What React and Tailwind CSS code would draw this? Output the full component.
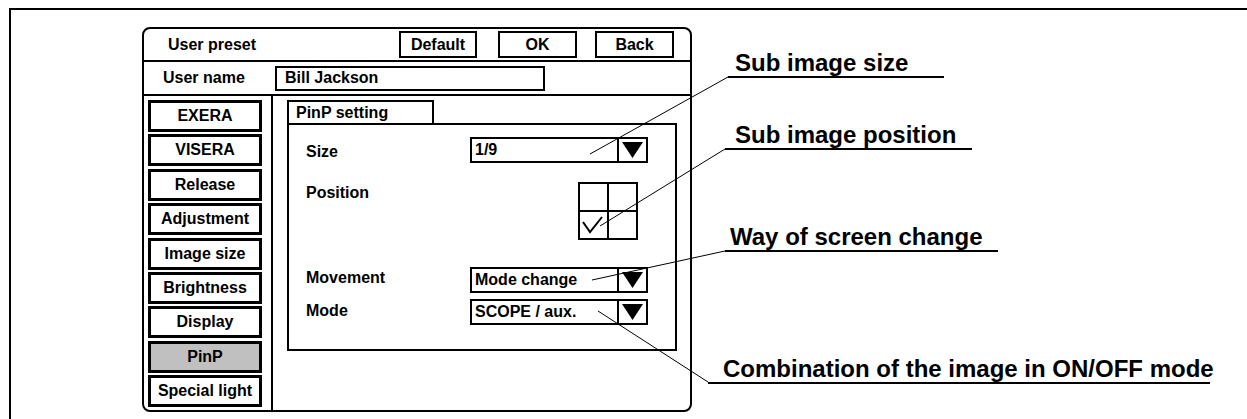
import React from 'react';
import clsx from 'clsx';

const menu = [
  'EXERA',
  'VISERA',
  'Release',
  'Adjustment',
  'Image size',
  'Brightness',
  'Display',
  'PinP',
  'Special light',
];

function TopButton({ children, className }) {
  return (
    <div
      className={clsx(
        'mt-[2px] flex h-[27px] items-center justify-center border-2 border-black',
        className
      )}
    >
      {children}
    </div>
  );
}

function Dropdown({ value }) {
  return (
    <div className="flex h-[26px] w-[178px] border-2 border-black">
      <div className="flex flex-1 items-center pl-[3px] whitespace-nowrap">{value}</div>
      <div className="flex w-[29px] items-center justify-center border-l-2 border-black">
        <svg width="21" height="16" viewBox="0 0 21 16">
          <polygon points="0,0 21,0 10.5,16" fill="black" />
        </svg>
      </div>
    </div>
  );
}

function Callout({ text, className }) {
  return (
    <div
      className={clsx(
        'whitespace-nowrap border-b-2 border-black text-[24px] leading-[26px]',
        className
      )}
    >
      {text}
    </div>
  );
}

export default function App() {
  return (
    <div className="relative h-[419px] w-[1247px] overflow-hidden bg-white pl-[9px] pt-[8px] font-['Liberation_Sans',Arial,sans-serif] font-bold text-black">
      <div className="flex h-full items-start border-l-2 border-t-2 border-black">
        {/* Settings panel */}
        <div className="ml-[131px] mt-[17px] flex h-[385px] w-[550px] shrink-0 flex-col rounded-[8px] border-2 border-black text-[16px] leading-[18px]">
          {/* Title row */}
          <div className="flex h-[33px] shrink-0 items-start border-b-2 border-black">
            <div className="flex h-[31px] w-[255px] items-center pl-[24px]">User preset</div>
            <TopButton className="w-[78px]">Default</TopButton>
            <TopButton className="ml-[21px] w-[79px]">OK</TopButton>
            <TopButton className="ml-[18px] w-[79px]">Back</TopButton>
          </div>

          {/* User name row */}
          <div className="flex h-[34px] shrink-0 items-center border-b-2 border-black">
            <div className="w-[131px] pl-[19px]">User name</div>
            <div className="flex h-[25px] w-[270px] items-center border-2 border-black pl-[8px]">
              Bill Jackson
            </div>
          </div>

          {/* Body */}
          <div className="flex flex-1">
            <div className="flex w-[129px] shrink-0 flex-col gap-[2.4px] border-r-2 border-black pl-[4px] pt-[4px]">
              {menu.map((item) => (
                <div
                  key={item}
                  className={clsx(
                    'flex h-[32px] w-[114px] items-center justify-center border-[3px] border-black whitespace-nowrap',
                    item === 'PinP' && 'bg-[#c0c0c0]'
                  )}
                >
                  {item}
                </div>
              ))}
            </div>

            <div className="flex flex-col pl-[14px] pt-[4px]">
              <div className="flex h-[23px] w-[147px] items-center border-2 border-b-0 border-black pl-[7px]">
                PinP setting
              </div>
              <div className="h-[228px] w-[390px] border-2 border-black pl-[17px]">
                <div className="mt-[12px] flex items-center">
                  <div className="mt-[4px] w-[164px]">Size</div>
                  <Dropdown value="1/9" />
                </div>

                <div className="mt-[19px] flex items-start">
                  <div className="w-[164px] pt-[2px]">Position</div>
                  <div className="ml-[108px] grid h-[58px] w-[60px] grid-cols-[29px_27px] grid-rows-[28px_26px] border-2 border-black">
                    <div className="border-b-2 border-r-2 border-black" />
                    <div className="border-b-2 border-black" />
                    <div className="border-r-2 border-black">
                      <svg width="27" height="26" viewBox="0 0 27 26">
                        <polyline
                          points="3,10 10,20 22,5"
                          fill="none"
                          stroke="black"
                          strokeWidth="2"
                        />
                      </svg>
                    </div>
                    <div />
                  </div>
                </div>

                <div className="mt-[27px] flex items-center">
                  <div className="mb-[5px] w-[164px]">Movement</div>
                  <Dropdown value="Mode change" />
                </div>

                <div className="mt-[6px] flex items-center">
                  <div className="mb-[2px] w-[164px]">Mode</div>
                  <Dropdown value="SCOPE / aux." />
                </div>
              </div>
            </div>
          </div>
        </div>

        {/* Callouts */}
        <div className="ml-[16px] mt-[40px] flex flex-col items-start">
          <Callout text="Sub image size" className="ml-[20px] w-[216px] pl-[7px]" />
          <Callout text="Sub image position" className="ml-[17px] mt-[44px] w-[247px] pl-[10px]" />
          <Callout text="Way of screen change" className="ml-[17px] mt-[74px] w-[273px] pl-[5px]" />
          <Callout
            text="Combination of the image in ON/OFF mode"
            className="mt-[104px] w-[502px] pl-[15px]"
          />
        </div>
      </div>

      {/* Leader lines */}
      <svg
        className="pointer-events-none absolute left-0 top-0"
        width="1247"
        height="419"
        viewBox="0 0 1247 419"
      >
        <g stroke="black" strokeWidth="1">
          <line x1="728" y1="77" x2="590" y2="154" />
          <line x1="725" y1="149" x2="600" y2="226" />
          <line x1="725" y1="251" x2="592" y2="280" />
          <line x1="708" y1="382" x2="598" y2="311" />
        </g>
      </svg>
    </div>
  );
}
